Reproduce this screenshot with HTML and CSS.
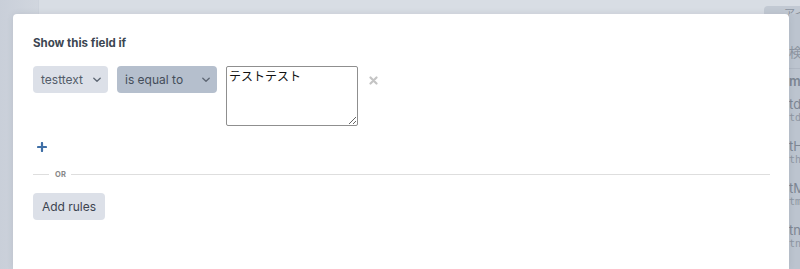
FILE: index.html
```html
<!DOCTYPE html>
<html lang="ja">
<head>
    <meta charset="UTF-8">
    <title>Conditional logic</title>
    <link rel="stylesheet" href="styles.css">
</head>
<body>

<div class="backdrop">
    <div class="topbar">
        <span class="tab">アイテム</span>
    </div>
    <div class="side">
        <p class="side-search">検索</p>
        <p class="side-head">more</p>
        <div class="side-item"><b>tdata</b><small>tdata</small></div>
        <div class="side-item"><b>tHead</b><small>thead</small></div>
        <div class="side-item"><b>tMain</b><small>tmain</small></div>
        <div class="side-item"><b>tnote</b><small>tnote</small></div>
    </div>
</div>

<div class="modal">
    <h2 class="title">Show this field if</h2>

    <div class="rule">
        <div class="select">
            <span>testtext</span>
            <svg width="10" height="10" viewBox="0 0 10 10"><path d="M1.8 3.3 5 6.3 8.2 3.3" fill="none" stroke="currentColor" stroke-width="1.4" stroke-linecap="round" stroke-linejoin="round"/></svg>
        </div>
        <div class="select dark">
            <span>is equal to</span>
            <svg width="10" height="10" viewBox="0 0 10 10"><path d="M1.8 3.3 5 6.3 8.2 3.3" fill="none" stroke="currentColor" stroke-width="1.4" stroke-linecap="round" stroke-linejoin="round"/></svg>
        </div>
        <textarea class="value">テストテスト</textarea>
        <svg class="remove" width="9" height="9" viewBox="0 0 9 9"><path d="M1.5 1.5 7.5 7.5M7.5 1.5 1.5 7.5" stroke="currentColor" stroke-width="2.2" stroke-linecap="round"/></svg>
    </div>

    <svg class="add" width="10" height="10" viewBox="0 0 10 10"><path d="M5 1v8M1 5h8" stroke="currentColor" stroke-width="2.2" stroke-linecap="round"/></svg>

    <div class="or"><span>OR</span></div>

    <button class="btn">Add rules</button>
</div>

</body>
</html>
```

FILE: styles.css
```css
*{
    margin: 0;
    padding: 0;
    box-sizing: border-box;
}
html, body{
    height: 100%;
    overflow: hidden;
}
body{
    font-family: Inter, "Noto Sans", "Noto Sans CJK JP", sans-serif;
    background: linear-gradient(90deg, #c9cfd9 0%, #d3d8e0 6%, #d6dbe2 100%);
    position: relative;
}

/* page behind the modal */
.backdrop{
    height: 100%;
    display: flex;
    flex-direction: column;
}
.topbar{
    height: 14px;
    background: #d8dde4;
    border-left: 1px solid #cdd3dc;
    margin-left: 38px;
    display: flex;
    justify-content: flex-end;
}
.tab{
    margin-top: 6px;
    margin-right: -20px;
    width: 56px;
    height: 14px;
    border-radius: 4px 4px 0 0;
    background: #c2c9d3;
    color: #8a929e;
    font-size: 11px;
    padding-left: 20px;
    line-height: 16px;
    overflow: hidden;
    white-space: nowrap;
}
.side{
    position: absolute;
    top: 14px;
    right: 0;
    width: 11px;
    bottom: 0;
    background: #bcc4cf;
    color: #7d8693;
    overflow: hidden;
    white-space: nowrap;
    font-size: 13px;
}
.side-search{
    padding-top: 28px;
    height: 55px;
    border-bottom: 1px solid #b0b8c4;
    color: #8c94a0;
}
.side-head{
    padding-top: 4px;
    height: 26px;
    font-weight: 600;
}
.side-item{
    display: flex;
    flex-direction: column;
    height: 42px;
    padding-top: 2px;
}
.side-item b{
    font-weight: 400;
    line-height: 15px;
}
.side-item small{
    font-family: "DejaVu Sans Mono", monospace;
    font-size: 10px;
    color: #8e96a2;
}

/* modal */
.modal{
    position: absolute;
    top: 14px;
    left: 13px;
    width: 776px;
    bottom: 0;
    background: #fff;
    border-radius: 4px 4px 0 0;
    padding: 22px 19px 0 20px;
    box-shadow: 0 0 6px rgba(60, 70, 90, 0.12);
}
.title{
    font-size: 11.5px;
    font-weight: 700;
    color: #3c4652;
    line-height: 14px;
    margin-bottom: 16px;
}
.rule{
    display: flex;
    align-items: flex-start;
    gap: 9px;
}
.select{
    height: 27px;
    border-radius: 4px;
    background: #dce0e8;
    color: #535c69;
    font-size: 12px;
    display: flex;
    align-items: center;
    justify-content: space-between;
    padding: 0 6px 0 8px;
    width: 75px;
}
.select svg{
    color: #5f6875;
}
.select.dark{
    background: #b5bfcd;
    width: 100px;
    color: #444d5a;
}
.value{
    width: 132px;
    height: 60px;
    resize: vertical;
    border: 1px solid #8f8f8f;
    border-radius: 2px;
    font-family: "Noto Sans CJK JP", sans-serif;
    font-size: 12px;
    line-height: 17px;
    color: #111;
    padding: 0 2px;
}
.remove{
    color: #c4c4c4;
    margin: 10px 0 0 2px;
}
.add{
    display: block;
    color: #3f6fa6;
    margin: 16px 0 0 4px;
}
.or{
    display: flex;
    align-items: center;
    margin-top: 18px;
    font-size: 7.5px;
    font-weight: 700;
    color: #888;
    letter-spacing: 0.3px;
}
.or::before{
    content: "";
    width: 16px;
    height: 1px;
    background: #dedede;
}
.or span{
    padding: 0 5px 0 6px;
}
.or::after{
    content: "";
    flex: 1;
    height: 1px;
    background: #dedede;
}
.btn{
    margin-top: 14px;
    height: 27px;
    width: 72px;
    border: none;
    border-radius: 4px;
    background: #dce0e8;
    color: #3c4450;
    font-family: Inter, "Noto Sans", sans-serif;
    font-size: 12px;
}
```
